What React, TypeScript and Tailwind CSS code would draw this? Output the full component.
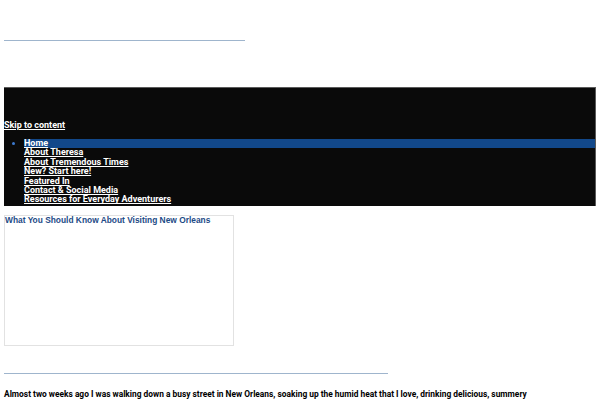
import React from 'react';

const navItems = [
  'Home',
  'About Theresa',
  'About Tremendous Times',
  'New? Start here!',
  'Featured In',
  'Contact & Social Media',
  'Resources for Everyday Adventurers',
];

const App: React.FC = () => {
  return (
    <div className="bg-white w-[600px] h-[400px] overflow-hidden px-[4px] font-['Roboto','Noto_Sans',sans-serif]">
      {/* site title rule */}
      <div className="pt-[40px]">
        <div className="w-[241px] h-px bg-[#9fb5cd]" />
      </div>

      {/* header */}
      <header className="mt-[46px] w-[592px] h-[119px] bg-[#0a0a0a] border-t border-r border-[#5a5a5a]">
        <div className="pt-[32px]">
          <a href="#content" className="block text-white text-[9px] font-bold leading-[10px] underline">
            Skip to content
          </a>
        </div>
        <ul className="mt-[9px] list-disc pl-[20px] text-[9px] font-bold leading-[9.4px] text-white">
          {navItems.map((item, i) => (
            <li
              key={item}
              className={i === 0 ? 'bg-[#12488a] marker:text-[#3d7bd0]' : 'list-none'}
            >
              <a href="#" className="underline text-white">{item}</a>
            </li>
          ))}
        </ul>
      </header>

      {/* featured post */}
      <div className="mt-[9px] w-[230px] h-[131px] border border-[#e2e2e2]">
        <h2 className="text-[#1c4a86] font-['Liberation_Sans',Arial,sans-serif] font-bold text-[8.4px] leading-[9px]">
          What You Should Know About Visiting New Orleans
        </h2>
      </div>

      <div className="mt-[27px] w-[384px] h-px bg-[#9fb5cd]" />

      <p id="content" className="mt-[15px] w-[545px] text-[8.4px] font-bold leading-[10px] text-black">
        Almost two weeks ago I was walking down a busy street in New Orleans, soaking up the humid heat that I love, drinking delicious, summery
        drinks, and people-watching the colourful characters that make this city so unforgettable and full of life.
      </p>
    </div>
  );
};

export default App;
